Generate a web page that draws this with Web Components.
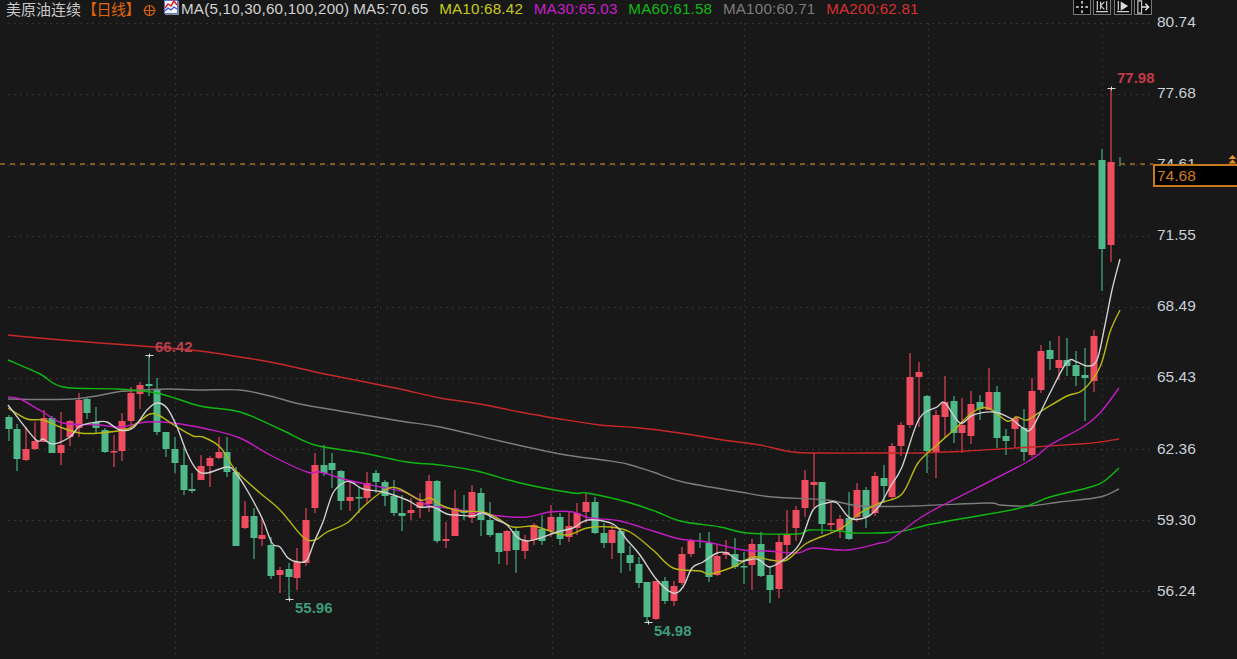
<!DOCTYPE html>
<html lang="zh">
<head>
<meta charset="utf-8">
<title>美原油连续</title>
<style>
  html, body { margin: 0; padding: 0; background: #181818; }
</style>
</head>
<body>
<quote-chart>
  <chart-legend slot="legend" name="美原油连续" period="【日线】">
    <ma-item color="#d2d2d2" style="margin-right:4px">MA(5,10,30,60,100,200)</ma-item>
    <ma-item color="#d2d2d2">MA5:70.65</ma-item>
    <ma-item color="#c8c81e">MA10:68.42</ma-item>
    <ma-item color="#c81ec8">MA30:65.03</ma-item>
    <ma-item color="#12b812">MA60:61.58</ma-item>
    <ma-item color="#7c7c7c">MA100:60.71</ma-item>
    <ma-item color="#d83030">MA200:62.81</ma-item>
  </chart-legend>
  <tool-bar slot="tools"></tool-bar>
  <candle-plot slot="plot"></candle-plot>
  <price-axis slot="axis" current="74.68"></price-axis>
</quote-chart>

<script>
// kind, wick top, body top, body bottom, wick bottom (page pixels)
const CANDLES = [
  ['g',415,417,429,441],['g',424,429,459,471],['r',427,449,460,461],['r',422,441,449,450],
  ['r',410,418,442,442],['g',416,418,453,453],['r',412,445,453,465],['r',420,421,437,446],
  ['r',393,400,428,437],['g',397,399,413,419],['g',407,422,428,433],['g',428,430,452,453],
  ['r',435,451,452,467],['r',413,421,451,461],['r',387,393,421,430],['r',382,385,394,409],
  ['g',355,384,386,396],['g',378,390,432,435],['g',432,432,449,457],['g',437,449,463,473],
  ['g',447,465,490,495],['g',473,489,491,493],['r',455,466,480,480],['r',456,458,466,487],
  ['r',437,452,458,459],['g',437,452,472,477],['g',467,472,546,546],['r',501,516,528,529],
  ['g',508,516,538,559],['r',518,535,539,546],['g',537,545,576,579],['r',567,570,575,593],
  ['g',563,569,577,600],['r',548,562,578,590],['r',508,520,563,566],['r',453,465,508,513],
  ['g',445,465,473,476],['g',453,463,470,488],['g',470,471,501,510],['r',480,497,501,511],
  ['g',487,497,498,513],['r',472,483,498,504],['g',470,473,482,493],['g',480,482,496,506],
  ['g',480,496,513,516],['g',495,513,516,531],['r',498,510,513,520],['r',493,502,508,518],
  ['r',475,481,504,512],['g',480,481,541,543],['r',522,539,541,548],['r',490,508,536,536],
  ['g',495,510,513,520],['r',485,492,518,523],['g',488,493,520,536],['g',502,520,535,537],
  ['g',533,533,552,564],['r',530,531,551,565],['g',528,531,550,573],['r',535,540,551,559],
  ['r',523,525,540,545],['g',515,529,541,545],['r',505,517,531,537],['g',513,517,539,545],
  ['r',512,526,537,542],['r',503,513,528,535],['r',493,502,512,523],['g',497,502,533,534],
  ['g',523,533,543,548],['r',523,530,543,559],['g',528,531,553,573],['g',546,555,563,571],
  ['g',557,564,583,588],['g',582,582,617,622],['r',581,581,619,620],['g',577,581,601,604],
  ['r',581,586,601,606],['r',547,554,583,585],['r',539,541,554,557],['g',533,540,540,548],
  ['g',532,543,577,582],['r',545,556,575,576],['r',540,552,555,559],['g',538,554,567,569],
  ['g',552,566,567,584],['r',539,544,565,590],['g',532,544,576,577],['g',567,575,590,603],
  ['r',535,542,589,598],['r',510,535,545,560],['r',506,510,528,541],['r',470,480,508,517],
  ['r',453,482,485,508],['g',482,482,524,534],['r',503,523,525,533],['r',515,519,530,538],
  ['g',492,518,539,540],['r',483,490,517,522],['g',487,490,517,528],['r',472,476,513,516],
  ['g',465,478,486,503],['r',443,446,497,500],['r',422,425,446,456],['r',353,377,425,428],
  ['r',362,372,377,427],['g',395,396,451,473],['r',410,415,453,478],['r',376,402,417,438],
  ['g',396,401,433,443],['r',398,425,433,453],['r',391,404,436,444],['g',395,402,409,420],
  ['r',368,392,410,410],['g',386,392,438,448],['g',429,436,441,455],['r',416,418,429,448],
  ['g',409,428,452,461],['r',378,391,455,457],['r',345,351,390,393],['g',341,350,359,370],
  ['r',336,360,368,380],['g',338,360,366,376],['g',351,365,376,386],['g',348,375,378,421],
  ['r',330,336,381,392],['g',149,160,249,291],['r',88,162,245,262],['g',157,160,160,166]
];

const LINES = {
  ma200: { color: '#c82828', pts: '8,335 50,339 100,343 155,347 200,351 240,357 280,364 320,373 360,381 400,389 440,398 480,404 520,412 560,419 600,425 640,428 680,433 723,440 760,445 793,452 830,453 880,453 920,453 967,451 1000,449 1033,447 1080,444 1100,442 1119,439' },
  ma100: { color: '#7c7c7c', pts: '8,399 73,399 117,392 127,391 167,389 197,390 240,390 270,396 300,404 340,411 400,421 440,427 500,441 560,454 603,460 627,464 653,472 683,482 740,492 773,497 827,500 860,506 913,506 987,503 1000,505 1027,506 1060,502 1100,497 1119,489' },
  ma60: { color: '#10b810', pts: '8,360 40,374 63,387 117,389 157,393 200,406 240,412 282,430 315,445 363,453 407,462 440,465 477,471 520,483 573,493 587,493 627,502 657,512 680,521 720,527 747,533 797,534 810,530 840,531 853,533 897,532 927,525 960,519 1020,508 1050,497 1087,488 1103,482 1119,468' },
  ma30: { color: '#c41cc4', pts: '8,397 20,399 43,412 63,423 100,425 120,427 147,422 173,423 207,429 240,438 270,455 307,472 320,472 347,480 380,487 407,493 427,505 440,507 460,510 500,516 527,517 550,512 573,512 590,518 620,521 653,531 680,539 707,542 743,550 767,551 797,553 813,548 847,550 880,543 890,540 920,518 947,503 1027,462 1050,445 1083,427 1100,413 1119,388' },
  ma10: { color: '#b8b814', pts: '8,408 27,419 43,420 60,427 80,433 100,433 127,429 137,423 150,414 160,416 177,427 193,436 203,437 220,447 233,467 240,475 260,493 280,510 303,537 315,540 327,532 347,523 363,507 383,491 397,488 420,500 430,498 443,506 460,511 483,512 497,518 513,527 533,526 547,530 567,535 587,528 610,527 630,532 653,550 673,568 700,571 710,574 733,567 753,557 770,560 787,560 807,543 840,529 860,513 880,503 902,494 918,463 937,445 957,427 973,412 988,408 1007,421 1017,417 1027,420 1043,410 1067,396 1083,390 1100,367 1110,332 1120,310' },
  ma5: { color: '#d0d0d0', pts: '8,405 35,439 43,439 53,444 70,437 80,426 97,422 107,422 120,430 133,428 147,410 157,403 167,408 177,427 187,453 197,470 207,473 227,467 235,472 247,490 262,518 272,543 280,547 288,558 298,562 307,560 315,540 323,522 333,493 345,482 353,483 363,489 383,492 407,500 420,507 433,507 447,514 457,515 473,516 483,513 497,520 507,525 517,537 527,541 540,538 557,532 573,528 588,520 613,524 627,540 640,555 657,580 673,593 683,587 692,568 703,562 717,553 727,553 740,561 757,559 770,567 787,557 800,543 813,510 827,503 837,503 850,518 867,517 880,505 890,487 902,467 919,419 937,407 945,403 960,423 973,415 993,412 1010,418 1023,428 1032,428 1050,393 1067,362 1077,362 1087,366 1097,360 1105,325 1112,290 1120,259' }
};

const GRID_Y = [23, 94, 165, 236, 307, 378, 449, 520, 591];
const GRID_X = [175, 377, 552, 744, 928, 1102];
const AXIS = ['80.74','77.68','74.61','71.55','68.49','65.43','62.36','59.30','56.24'];

const svgNS = 'http://www.w3.org/2000/svg';

class QuoteChart extends HTMLElement {
  constructor() {
    super();
    this.attachShadow({ mode: 'open' }).innerHTML = `
      <style>
        :host {
          display: grid;
          grid-template-columns: 1153px 84px;
          grid-template-rows: 18px 641px;
          width: 1237px;
          height: 659px;
          overflow: hidden;
          background: #181818;
          font-family: "Liberation Sans", "Noto Sans CJK SC", sans-serif;
        }
        .head { grid-column: 1 / 3; grid-row: 1; display: flex; justify-content: space-between; position: relative; z-index: 2; }
        .plot { grid-column: 1; grid-row: 2; min-width: 0; }
        .axis { grid-column: 2; grid-row: 2; }
      </style>
      <div class="head"><slot name="legend"></slot><slot name="tools"></slot></div>
      <div class="plot"><slot name="plot"></slot></div>
      <div class="axis"><slot name="axis"></slot></div>`;
  }
}

class ChartLegend extends HTMLElement {
  constructor() {
    super();
    this.attachShadow({ mode: 'open' }).innerHTML = `
      <style>
        :host { display: flex; align-items: center; height: 16px; padding-left: 6px; font-size: 15px; white-space: nowrap; }
        .name { color: #c8c8c8; width: 75px; }
        .period { color: #e0640c; width: 60px; margin-left: 1px; letter-spacing: -.5px; }
        svg { display: block; flex: none; }
        .cross { margin: 4px 0 0 1px; }
        .ico { margin: -2px 2px 0 8px; }
        .items { display: flex; }
      </style>
      <span class="name"></span><span class="period"></span>
      <svg class="cross" width="13" height="13" viewBox="0 0 13 13" fill="none" stroke="#d8600c" stroke-width="1.2">
        <circle cx="6.5" cy="6.5" r="5"/><path d="M0.5 6.5h12M6.5 1.5v10"/>
      </svg>
      <svg class="ico" width="15" height="15" viewBox="0 0 15 15">
        <rect x="13" y="1" width="2" height="14" fill="#8a8a8a"/>
        <rect x="1" y="13" width="14" height="2" fill="#8a8a8a"/>
        <rect x=".5" y=".5" width="13" height="13" fill="#f6f6ff" stroke="#5a78c8"/>
        <path d="M1 8l3-4 3 2 3-5 3 4" fill="none" stroke="#e02020" stroke-width="1.5"/>
        <path d="M1 11l3-3 3 2 3-3 3 2" fill="none" stroke="#3050d0" stroke-width="1.3"/>
      </svg>
      <div class="items"><slot></slot></div>`;
    this.shadowRoot.querySelector('.name').textContent = this.getAttribute('name');
    this.shadowRoot.querySelector('.period').textContent = this.getAttribute('period');
  }
}

class MaItem extends HTMLElement {
  constructor() {
    super();
    this.attachShadow({ mode: 'open' }).innerHTML = `
      <style>
        :host { display: block; margin-right: 10.7px; letter-spacing: .2px; font-size: 15.2px; }
      </style><slot></slot>`;
    this.style.color = this.getAttribute('color');
  }
}

class ToolBar extends HTMLElement {
  constructor() {
    super();
    const icons = [
      // move
      '<path d="M7.5 1v3M7.5 11v3M1 7.5h3M11 7.5h3" stroke="#e0e0e0" stroke-width="1.6"/><rect x="6.5" y="6.5" width="2" height="2" fill="#e0e0e0"/>',
      // zoom range back
      '<path d="M2.5 1v10M12.5 1v10M1 12.5h13M10 2L6 6l4 4M6 2v8" stroke="#cfcfcf" stroke-width="1.3" fill="none"/>',
      // play range
      '<path d="M2.5 1v10M1 12.5h13" stroke="#cfcfcf" stroke-width="1.3" fill="none"/><path d="M5 1.5l8 5-8 5z" fill="#d8d8d8"/>',
      // move right
      '<path d="M2 1h4v13h-4z" stroke="#cfcfcf" stroke-width="1.2" fill="none"/><path d="M6 7.5h7M10 4l3.5 3.5L10 11" stroke="#e0e0e0" stroke-width="1.5" fill="none"/>'
    ];
    this.attachShadow({ mode: 'open' }).innerHTML = `
      <style>
        :host { display: flex; gap: 2.3px; height: 15px; padding-right: 85px; }
        .btn { width: 18px; height: 15px; box-sizing: border-box; border: 1px solid #787878; border-top: 0; background: #0c0c0c; }
        svg { display: block; width: 16px; height: 14px; }
      </style>
      ${icons.map(i => `<div class="btn"><svg viewBox="0 0 15 15">${i}</svg></div>`).join('')}`;
  }
}

class CandlePlot extends HTMLElement {
  constructor() {
    super();
    this.attachShadow({ mode: 'open' }).innerHTML = `
      <style>
        :host { display: block; width: 1153px; height: 641px; }
        svg { display: block; overflow: visible; }
        text { font: bold 15px "Liberation Sans", sans-serif; }
      </style>
      <svg width="1153" height="641" viewBox="0 18 1153 641"></svg>`;
    this.draw(this.shadowRoot.querySelector('svg'));
  }

  add(svg, name, attrs, text) {
    const el = document.createElementNS(svgNS, name);
    for (const k in attrs) el.setAttribute(k, attrs[k]);
    if (text) el.textContent = text;
    svg.appendChild(el);
    return el;
  }

  // catmull-rom through the read points, the MA lines are smooth
  curve(pts) {
    const p = pts.split(' ').map(s => s.split(',').map(Number));
    let d = `M${p[0][0]} ${p[0][1]}`;
    for (let i = 0; i < p.length - 1; i++) {
      const a = p[Math.max(i - 1, 0)], b = p[i], c = p[i + 1], e = p[Math.min(i + 2, p.length - 1)];
      const c1 = [b[0] + (c[0] - a[0]) / 6, b[1] + (c[1] - a[1]) / 6];
      const c2 = [c[0] - (e[0] - b[0]) / 6, c[1] - (e[1] - b[1]) / 6];
      d += `C${c1[0].toFixed(1)} ${c1[1].toFixed(1)} ${c2[0].toFixed(1)} ${c2[1].toFixed(1)} ${c[0]} ${c[1]}`;
    }
    return d;
  }

  draw(svg) {
    const dots = { stroke: '#323232', 'stroke-width': 1, 'stroke-dasharray': '2 4', fill: 'none' };
    GRID_Y.forEach(y => this.add(svg, 'line', { x1: 8, x2: 1153, y1: y + .5, y2: y + .5, ...dots }));
    GRID_X.forEach(x => this.add(svg, 'line', { x1: x + .5, x2: x + .5, y1: 23, y2: 659, ...dots }));

    // current price
    this.add(svg, 'line', { x1: 0, x2: 1153, y1: 164, y2: 164, stroke: '#e8942a', 'stroke-width': 1, 'stroke-dasharray': '5 5' });

    const UP = '#ef4d5f', UP_WICK = '#b93a4a', DOWN = '#4fb98a', DOWN_WICK = '#37906a';
    CANDLES.forEach(([k, wt, bt, bb, wb], i) => {
      const x = Math.round(8.7 + i * 8.75);
      this.add(svg, 'rect', { x: x - .75, y: wt, width: 1.5, height: wb - wt, fill: k === 'r' ? UP_WICK : DOWN_WICK });
      if (bb > bt) this.add(svg, 'rect', { x: x - 3.5, y: bt, width: 7, height: Math.max(bb - bt, 1.5), fill: k === 'r' ? UP : DOWN });
    });

    for (const name of ['ma200', 'ma100', 'ma60', 'ma30', 'ma10', 'ma5']) {
      const l = LINES[name];
      this.add(svg, 'path', { d: this.curve(l.pts), fill: 'none', stroke: l.color, 'stroke-width': 1.4, 'stroke-linejoin': 'round' });
    }

    // high / low markers
    const mark = (x, y) => this.add(svg, 'path', { d: `M${x - 4} ${y}h8M${x} ${y - 2}v4`, stroke: '#d8d8d8', 'stroke-width': 1 });
    mark(149.5, 355.5); mark(1111.5, 88.5); mark(289.5, 599.5); mark(648.5, 622.5);
    this.add(svg, 'text', { x: 155, y: 352, fill: '#b8404c' }, '66.42');
    this.add(svg, 'text', { x: 1117, y: 83, fill: '#c23a48' }, '77.98');
    this.add(svg, 'text', { x: 295, y: 613, fill: '#3f9c78' }, '55.96');
    this.add(svg, 'text', { x: 654, y: 636, fill: '#3f9c78' }, '54.98');
  }
}

class PriceAxis extends HTMLElement {
  constructor() {
    super();
    this.attachShadow({ mode: 'open' }).innerHTML = `
      <style>
        :host { display: block; position: relative; height: 641px; width: 84px; font-size: 15.5px; color: #c8d0d8; }
        .rows { padding-top: 4px; display: grid; grid-auto-rows: 71.1px; }
        .rows div { padding-left: 4px; line-height: 0; display: flex; align-items: center; height: 0; }
        .tag { position: absolute; left: 0; right: 0; top: 146px; height: 23px; box-sizing: border-box; border: 2px solid #c87a1e; border-right: 0; background: #000; color: #d07c20; padding-left: 2px; line-height: 19px; }
        .arrow { position: absolute; right: 0; top: 137px; }
      </style>
      <div class="rows"></div>
      <div class="tag"></div>
      <svg class="arrow" width="9" height="10" viewBox="0 0 9 10" fill="#e89020">
        <path d="M4.5 0l4 4h-8zM4.5 4.5l4 4h-8z"/>
      </svg>`;
    const rows = this.shadowRoot.querySelector('.rows');
    AXIS.forEach(v => {
      const d = document.createElement('div');
      d.textContent = v;
      rows.appendChild(d);
    });
    this.shadowRoot.querySelector('.tag').textContent = this.getAttribute('current');
  }
}

customElements.define('quote-chart', QuoteChart);
customElements.define('chart-legend', ChartLegend);
customElements.define('ma-item', MaItem);
customElements.define('tool-bar', ToolBar);
customElements.define('candle-plot', CandlePlot);
customElements.define('price-axis', PriceAxis);
</script>
</body>
</html>
